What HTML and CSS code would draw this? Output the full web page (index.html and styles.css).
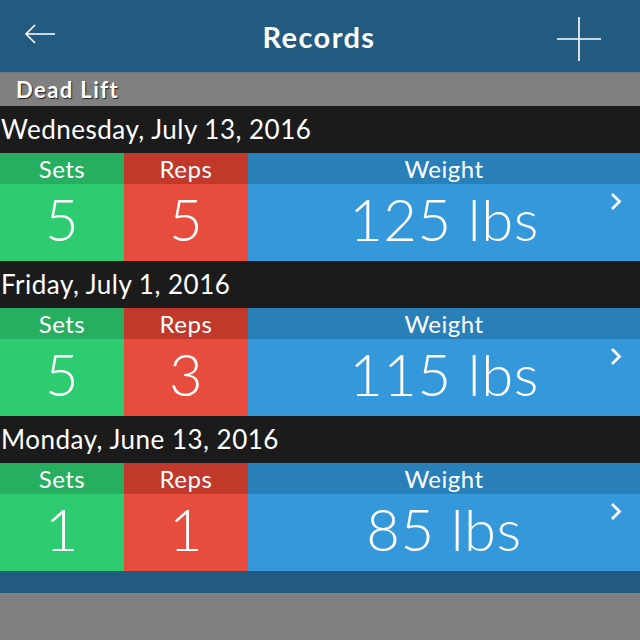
FILE: index.html
```html
<!DOCTYPE html>
<html lang="en">
<head>
    <meta charset="UTF-8">
    <meta name="viewport" content="width=device-width, initial-scale=1.0">
    <title>Records</title>
    <link rel="stylesheet" href="styles.css">
</head>
<body>
    <div class="app">
        <header class="topbar">
            <button class="icon-btn back">
                <svg width="32" height="22" viewBox="0 0 32 22"><path d="M31 11H2M11 2L2 11l9 9" fill="none" stroke="#fff" stroke-width="1.6"/></svg>
            </button>
            <h1 class="title">Records</h1>
            <button class="icon-btn add">
                <svg width="46" height="46" viewBox="0 0 46 46"><path d="M23 1v44M1 23h44" fill="none" stroke="#fff" stroke-width="1.6"/></svg>
            </button>
        </header>
        <div class="section">Dead Lift</div>

        <div class="record">
            <div class="date">Wednesday, July 13, 2016</div>
            <div class="stats">
                <div class="col sets"><div class="label">Sets</div><div class="value">5</div></div>
                <div class="col reps"><div class="label">Reps</div><div class="value">5</div></div>
                <div class="col weight"><div class="label">Weight</div><div class="value">125 lbs</div>
                    <svg class="chevron" width="12" height="19" viewBox="0 0 12 19"><path d="M2 2l7.5 7.5L2 17" fill="none" stroke="#fff" stroke-width="2.8"/></svg>
                </div>
            </div>
        </div>

        <div class="record">
            <div class="date">Friday, July 1, 2016</div>
            <div class="stats">
                <div class="col sets"><div class="label">Sets</div><div class="value">5</div></div>
                <div class="col reps"><div class="label">Reps</div><div class="value">3</div></div>
                <div class="col weight"><div class="label">Weight</div><div class="value">115 lbs</div>
                    <svg class="chevron" width="12" height="19" viewBox="0 0 12 19"><path d="M2 2l7.5 7.5L2 17" fill="none" stroke="#fff" stroke-width="2.8"/></svg>
                </div>
            </div>
        </div>

        <div class="record">
            <div class="date">Monday, June 13, 2016</div>
            <div class="stats">
                <div class="col sets"><div class="label">Sets</div><div class="value">1</div></div>
                <div class="col reps"><div class="label">Reps</div><div class="value">1</div></div>
                <div class="col weight"><div class="label">Weight</div><div class="value">85 lbs</div>
                    <svg class="chevron" width="12" height="19" viewBox="0 0 12 19"><path d="M2 2l7.5 7.5L2 17" fill="none" stroke="#fff" stroke-width="2.8"/></svg>
                </div>
            </div>
        </div>

        <div class="footer-band"></div>
        <div class="footer"></div>
    </div>
</body>
</html>
```

FILE: styles.css
```css
body {
    margin: 0;
    background: #808080;
    font-family: Lato, "Open Sans", sans-serif;
    color: #fff;
}
.app {
    width: 640px;
    height: 640px;
    display: flex;
    flex-direction: column;
    overflow: hidden;
}
.topbar {
    height: 72px;
    background: #235a80;
    display: flex;
    align-items: center;
    justify-content: space-between;
    padding: 0 38px 0 24px;
    box-sizing: border-box;
}
.icon-btn {
    background: none;
    border: none;
    padding: 0;
    display: flex;
}
.back {
    margin-top: -4px;
}
.add {
    margin-top: 6px;
}
.title {
    margin: 0;
    font-size: 29px;
    font-weight: 700;
    letter-spacing: 1.4px;
    margin-left: 26px;
}
.section {
    height: 34px;
    background: #808080;
    border-top: 1px solid #6c7a84;
    box-sizing: border-box;
    padding-left: 16px;
    font-size: 22px;
    font-weight: 700;
    letter-spacing: 1.4px;
    line-height: 34px;
    text-shadow: 1px 1px 1px #222;
}
.date {
    height: 47px;
    background: #1b1b1b;
    font-size: 26px;
    line-height: 47px;
    padding-left: 1px;
    letter-spacing: 0.5px;
}
.stats {
    display: grid;
    grid-template-columns: 124px 124px 1fr;
}
.col {
    position: relative;
    text-align: center;
}
.label {
    height: 31px;
    font-size: 24px;
    line-height: 31px;
    letter-spacing: 0.5px;
}
.value {
    height: 77px;
    font-size: 58px;
    font-weight: 300;
    line-height: 70px;
    letter-spacing: 0.5px;
}
.sets .label { background: #27ae60; }
.sets .value { background: #2ecc71; }
.reps .label { background: #c0392b; }
.reps .value { background: #e74c3c; }
.weight .label { background: #2980b9; }
.weight .value { background: #3498db; }
.chevron {
    position: absolute;
    right: 18px;
    top: 39px;
}
.footer-band {
    height: 22px;
    background: #235a80;
}
.footer {
    flex: 1;
    background: #808080;
}
```
